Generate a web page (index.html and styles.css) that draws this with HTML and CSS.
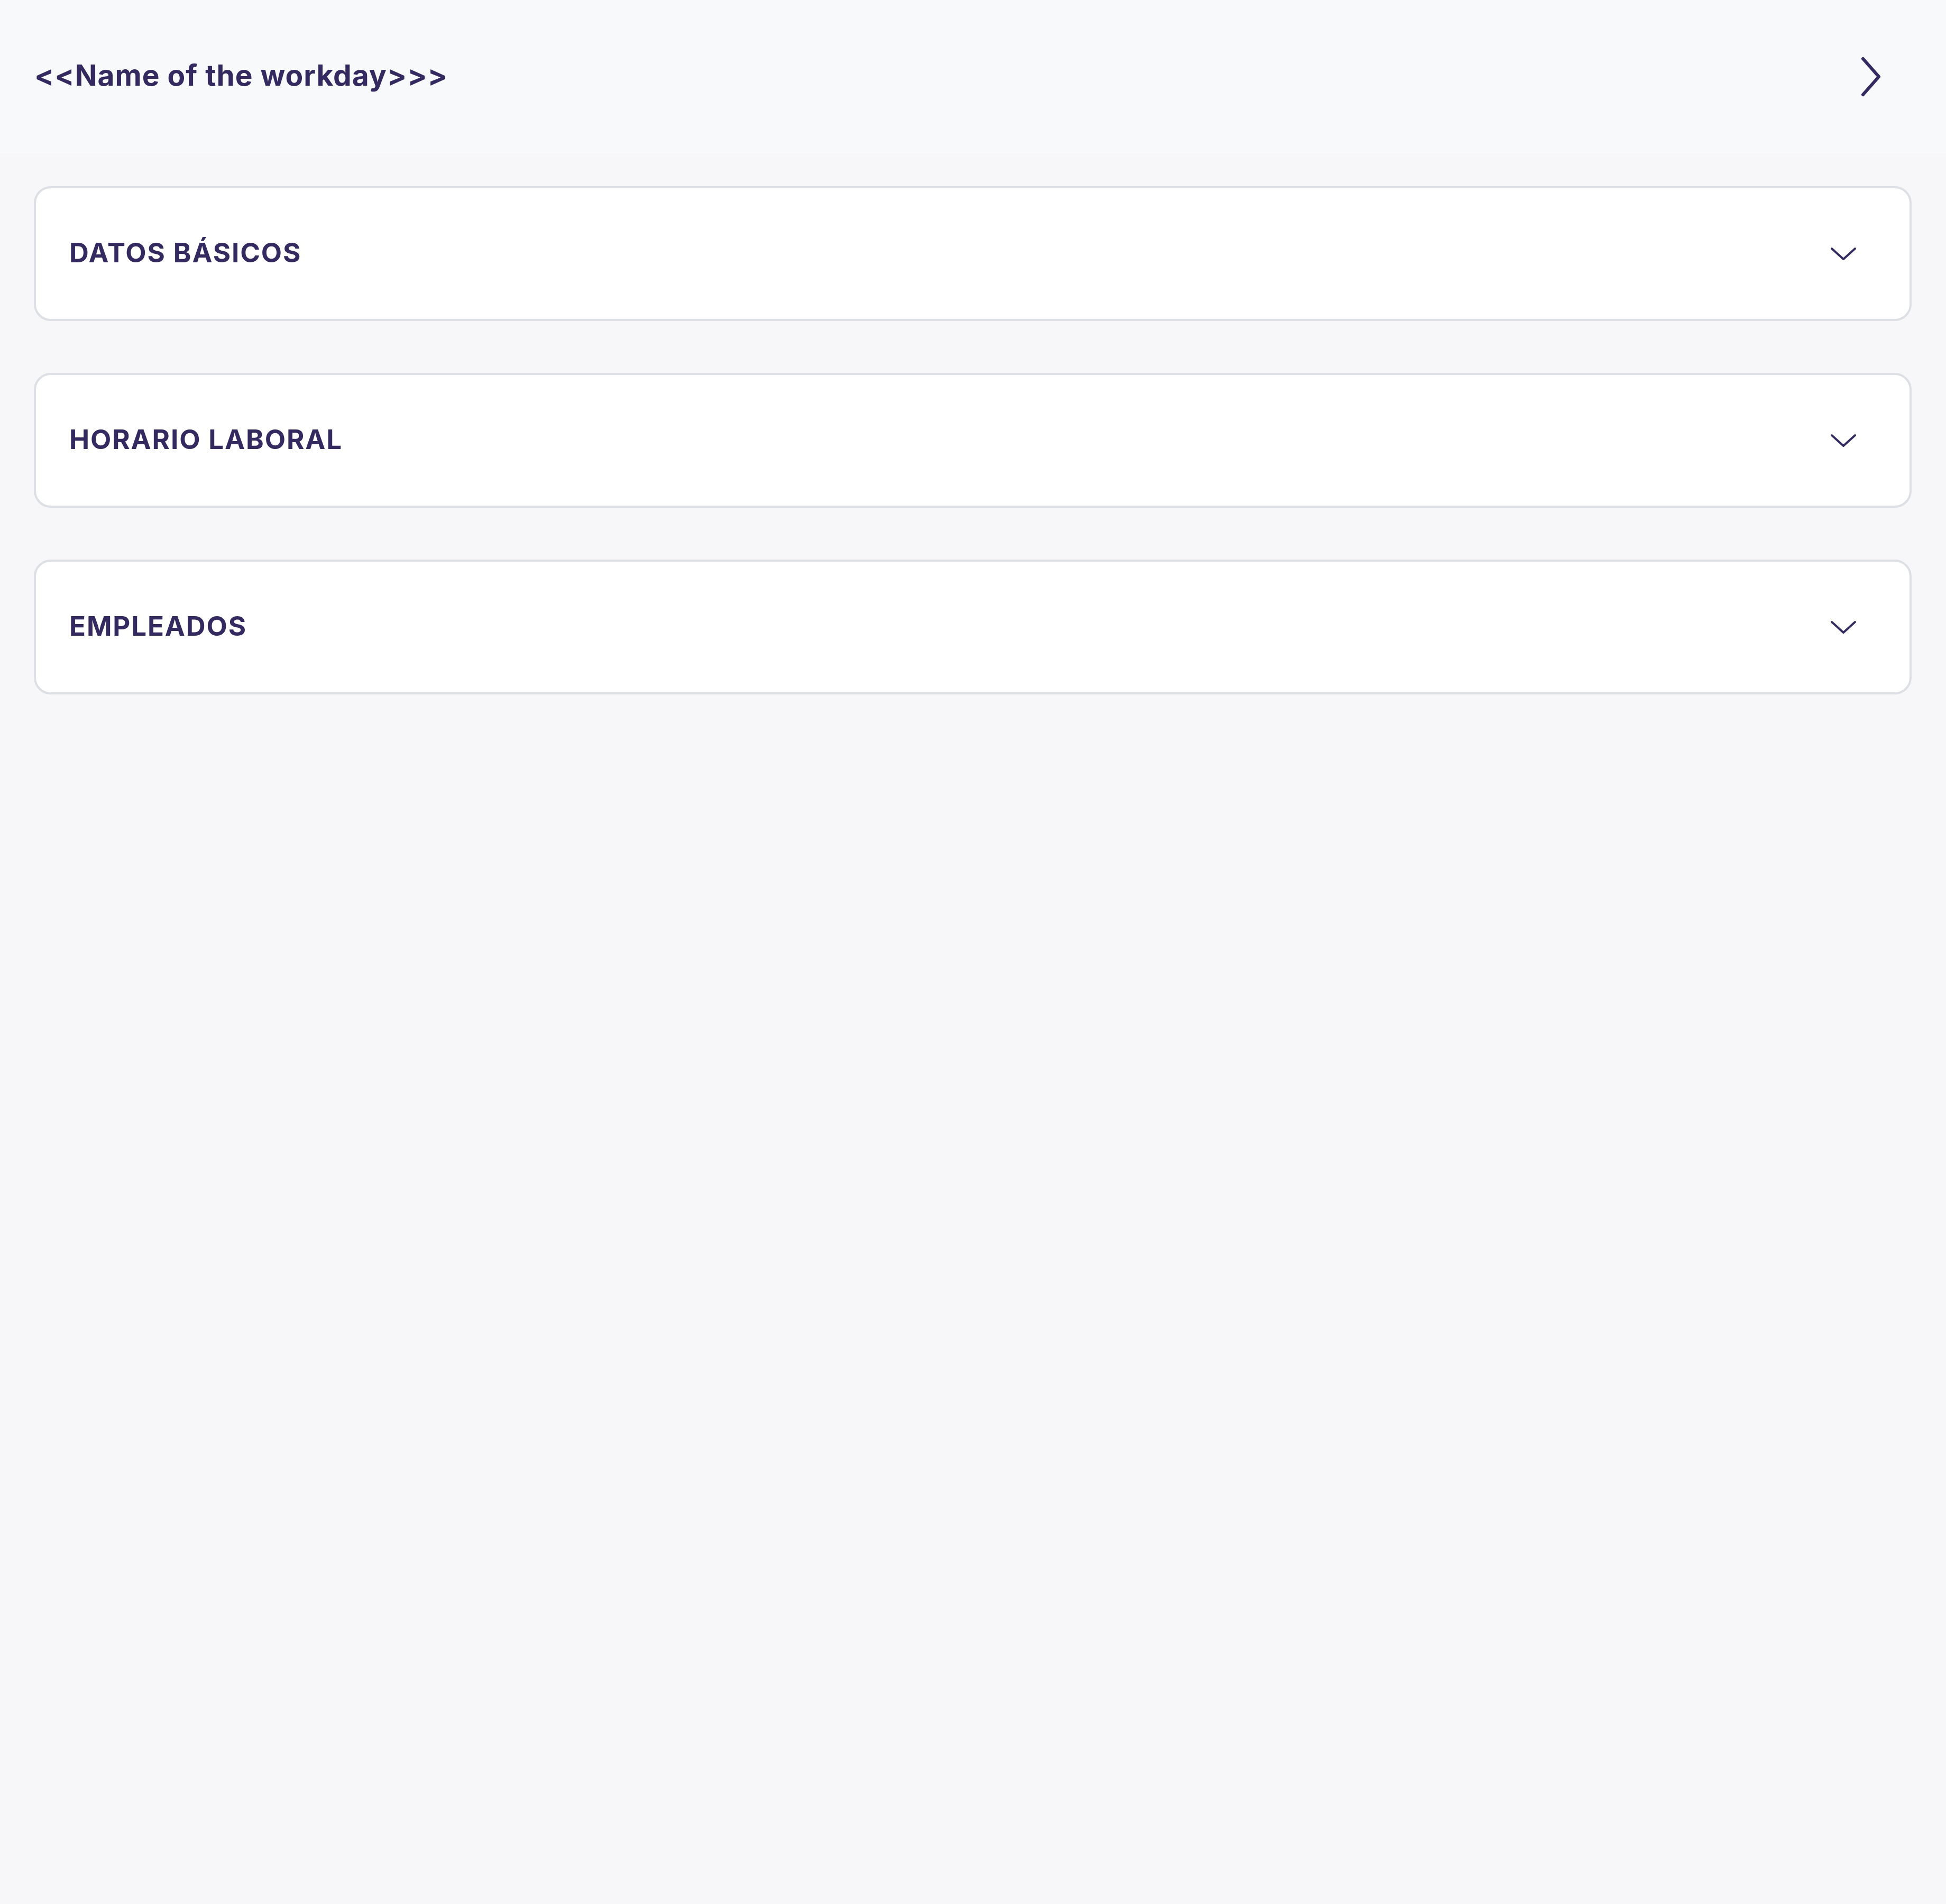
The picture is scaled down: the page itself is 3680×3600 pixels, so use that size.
FILE: index.html
```html
<!DOCTYPE html>
<html lang="es">
<head>
<meta charset="utf-8">
<title>Workday</title>
<link rel="stylesheet" href="styles.css">
</head>
<body>
<header class="topbar">
  <h1 class="title">&lt;&lt;Name of the workday&gt;&gt;&gt;</h1>
  <button class="next-btn" aria-label="Siguiente">
    <svg class="icon-next" viewBox="0 0 40 76" width="40" height="76"><path d="M5 4 L35 38 L5 72" fill="none" stroke="currentColor" stroke-width="6" stroke-linecap="round" stroke-linejoin="round"/></svg>
  </button>
</header>
<main class="sections">
  <section class="card">
    <h2 class="card-title">DATOS BÁSICOS</h2>
    <svg class="icon-down" viewBox="0 0 52 28" width="52" height="28"><path d="M4 4 L26 24 L48 4" fill="none" stroke="currentColor" stroke-width="4" stroke-linecap="round" stroke-linejoin="round"/></svg>
  </section>
  <section class="card">
    <h2 class="card-title">HORARIO LABORAL</h2>
    <svg class="icon-down" viewBox="0 0 52 28" width="52" height="28"><path d="M4 4 L26 24 L48 4" fill="none" stroke="currentColor" stroke-width="4" stroke-linecap="round" stroke-linejoin="round"/></svg>
  </section>
  <section class="card">
    <h2 class="card-title">EMPLEADOS</h2>
    <svg class="icon-down" viewBox="0 0 52 28" width="52" height="28"><path d="M4 4 L26 24 L48 4" fill="none" stroke="currentColor" stroke-width="4" stroke-linecap="round" stroke-linejoin="round"/></svg>
  </section>
</main>
</body>
</html>
```
FILE: styles.css
```css
html, body {
  margin: 0;
  padding: 0;
}
body {
  background: #f7f7f9;
  font-family: Inter, "Open Sans", sans-serif;
  color: #342a5f;
  min-height: 3600px;
}
.topbar {
  height: 290px;
  background: #f8f9fb;
  display: flex;
  align-items: center;
  justify-content: space-between;
  padding: 0 122px 0 65px;
  box-sizing: border-box;
}
.title {
  margin: 0 0 5px;
  font-size: 55px;
  font-weight: 700;
  letter-spacing: 1px;
  line-height: 1;
}
.next-btn {
  background: none;
  border: 0;
  padding: 0;
  color: #342a5f;
  display: flex;
}
.sections {
  display: flex;
  flex-direction: column;
  gap: 98px;
  padding: 62px 65px 64px 64px;
}
.card {
  height: 255px;
  box-sizing: border-box;
  background: #fff;
  border: 4px solid #dcdfe3;
  border-radius: 32px;
  display: flex;
  align-items: center;
  justify-content: space-between;
  padding: 0 99px 0 63px;
}
.card-title {
  margin: 0 0 5px;
  font-size: 51px;
  font-weight: 700;
  line-height: 1;
  letter-spacing: 1.9px;
}
.icon-down {
  color: #342a5f;
  display: block;
}
```
